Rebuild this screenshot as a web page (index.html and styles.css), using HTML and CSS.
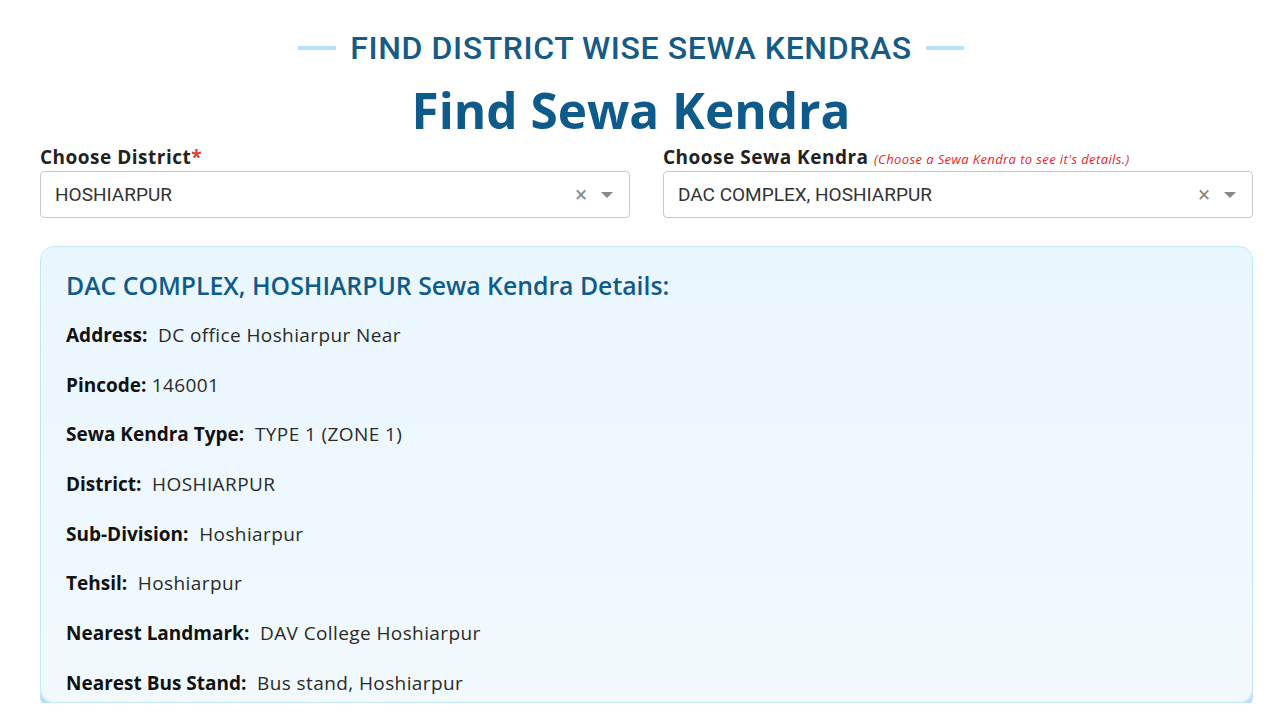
FILE: index.html
```html
<!DOCTYPE html>
<html lang="en">
  <head>
    <meta charset="UTF-8" />
    <meta name="viewport" content="width=device-width, initial-scale=1.0" />
    <title>Find Sewa Kendra</title>
    <link rel="stylesheet" href="styles.css">
  </head>
  <body>
    <header class="intro">
      <p class="eyebrow"><span class="bar"></span>FIND DISTRICT WISE SEWA KENDRAS<span class="bar"></span></p>
      <h1>Find Sewa Kendra</h1>
    </header>

    <main class="finder">
      <div class="fields">
        <div class="field">
          <label class="field-label">Choose District<span class="req">*</span></label>
          <div class="select">
            <span class="select-value">HOSHIARPUR</span>
            <span class="select-clear">&times;</span>
            <span class="select-caret"></span>
          </div>
        </div>
        <div class="field">
          <label class="field-label">Choose Sewa Kendra <span class="hint">(Choose a Sewa Kendra to see it's details.)</span></label>
          <div class="select">
            <span class="select-value">DAC COMPLEX, HOSHIARPUR</span>
            <span class="select-clear">&times;</span>
            <span class="select-caret"></span>
          </div>
        </div>
      </div>

      <section class="details">
        <h2>DAC COMPLEX, HOSHIARPUR Sewa Kendra Details:</h2>
        <p class="row"><b>Address:</b>&nbsp; DC office Hoshiarpur Near</p>
        <p class="row"><b>Pincode:</b> 146001</p>
        <p class="row"><b>Sewa Kendra Type:</b>&nbsp; TYPE 1 (ZONE 1)</p>
        <p class="row"><b>District:</b>&nbsp; HOSHIARPUR</p>
        <p class="row"><b>Sub-Division:</b>&nbsp; Hoshiarpur</p>
        <p class="row"><b>Tehsil:</b>&nbsp; Hoshiarpur</p>
        <p class="row"><b>Nearest Landmark:</b>&nbsp; DAV College Hoshiarpur</p>
        <p class="row"><b>Nearest Bus Stand:</b>&nbsp; Bus stand, Hoshiarpur</p>
      </section>
    </main>
  </body>
</html>
```

FILE: styles.css
```css
body {
  margin: 0;
  font-family: "Open Sans", Arial, sans-serif;
  background-color: #fff;
  color: #1a1a1a;
}

.intro {
  padding-right: 18px;
  text-align: center;
}

.eyebrow {
  display: flex;
  align-items: center;
  justify-content: center;
  gap: 14px;
  margin: 0;
  padding-top: 30px;
  font-family: Roboto, Arial, sans-serif;
  font-size: 32px;
  font-weight: 500;
  letter-spacing: 0.6px;
  line-height: 36px;
  color: #155b86;
}

.eyebrow .bar {
  width: 38px;
  height: 4px;
  background-color: #b6e2fa;
}

h1 {
  margin: 14px 0 5px;
  font-size: 49.5px;
  font-weight: 700;
  line-height: 60px;
  color: #0e5a8a;
}

.finder {
  width: 1213px;
  margin-left: 40px;
}

.fields {
  display: grid;
  grid-template-columns: 590px 590px;
  gap: 33px;
}

.field-label {
  display: block;
  font-size: 19px;
  font-weight: 700;
  letter-spacing: 0.5px;
  line-height: 24px;
  color: #222;
}

.req {
  color: #e53935;
}

.hint {
  font-size: 13px;
  font-weight: 400;
  font-style: italic;
  letter-spacing: 0.4px;
  line-height: 1;
  color: #e8242a;
}

.select {
  display: flex;
  align-items: center;
  height: 45px;
  margin-top: 2px;
  padding: 0 14px;
  border: 1px solid #c9c9c9;
  border-radius: 4px;
  background-color: #fff;
}

.select-value {
  flex: 1;
  font-family: Roboto, Arial, sans-serif;
  font-size: 19px;
  color: #333;
}

.select-clear {
  margin-right: 14px;
  font-family: Roboto, Arial, sans-serif;
  font-size: 22px;
  color: #888;
}

.select-caret {
  width: 0;
  height: 0;
  border-left: 6px solid transparent;
  border-right: 6px solid transparent;
  border-top: 6px solid #888;
  margin-right: 2px;
}

.details {
  margin-top: 28px;
  padding: 21px 25px 1px;
  border: 1px solid #c4e6f8;
  border-radius: 14px;
  background: linear-gradient(180deg, #eaf6fe 0%, #f1f9fc 100%);
  box-shadow: 0 7px 0 #b5e0fa;
}

.details h2 {
  margin: 0 0 15px;
  font-size: 24.8px;
  font-weight: 600;
  line-height: 34px;
  color: #0f5b89;
}

.row {
  margin: 0 0 13.7px;
  font-size: 19px;
  letter-spacing: 0.4px;
  line-height: 36px;
  color: #2a2a2a;
}

.row:last-child {
  margin-bottom: 0;
}

.row b {
  font-weight: 700;
  letter-spacing: 0;
  color: #111;
}
```
